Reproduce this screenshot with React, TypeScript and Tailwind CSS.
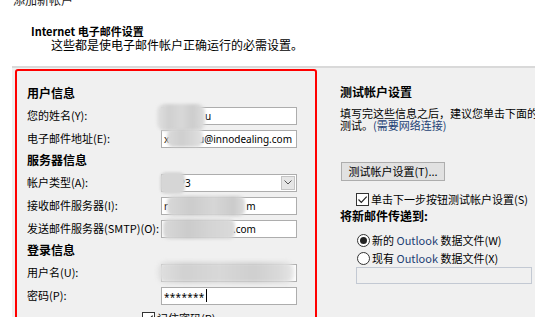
import type { ReactNode } from "react";

const cjk = "font-['Noto_Sans_CJK_SC',sans-serif]";
const latin = "font-['Noto_Sans','Noto_Sans_CJK_SC',sans-serif]";

function Heading({ children }: { children: ReactNode }) {
  return <div className="mb-[2px] flex h-[19px] items-center text-[12px] font-bold leading-none">{children}</div>;
}

function Row({ label, children }: { label: string; children: ReactNode }) {
  return (
    <div className="flex h-[23px] items-center">
      <div className="w-[134px] shrink-0 whitespace-nowrap text-[11px] leading-none">{label}</div>
      <div className="relative">{children}</div>
    </div>
  );
}

function TextBox({ children, className = "" }: { children?: ReactNode; className?: string }) {
  return (
    <div
      className={`flex h-[18px] w-[136px] items-center whitespace-nowrap border border-[#adadad] bg-white px-[2px] text-[10px] leading-none ${latin} ${className}`}
    >
      {children}
    </div>
  );
}

function CheckBox() {
  return (
    <span className="inline-flex h-[13px] w-[13px] shrink-0 items-center justify-center border border-[#333] bg-white">
      <svg width="11" height="11" viewBox="0 0 11 11" fill="none" stroke="#222" strokeWidth="1.2">
        <path d="M1.5 5.5 L4.3 8.3 L9.7 2.6" />
      </svg>
    </span>
  );
}

function Radio({ checked }: { checked?: boolean }) {
  return (
    <span className="inline-flex h-[13px] w-[13px] shrink-0 items-center justify-center rounded-full border border-[#333] bg-white">
      {checked && <span className="h-[7px] w-[7px] rounded-full bg-[#222]" />}
    </span>
  );
}

export default function App() {
  return (
    <div className={`flex h-[317px] w-[535px] flex-col overflow-hidden bg-white text-black ${cjk}`}>
      <div className="h-[66px] shrink-0">
        <div className="-mt-[6px] pl-[13px] text-[12px] leading-[12px] text-[#222]">添加新帐户</div>
        <div className="mt-[18px] pl-[31px] text-[11px] font-bold leading-[14px]">Internet 电子邮件设置</div>
        <div className="pl-[51px] text-[12px] leading-[14px]">这些都是使电子邮件帐户正确运行的必需设置。</div>
      </div>

      <div className="flex min-h-0 flex-1">
        <div className="w-[12px] shrink-0" />
        <div className="flex flex-1 border-t-2 border-[#d9d9d9] bg-[#f0f0f0]">
          {/* left: account fields, outlined in red */}
          <div className="ml-[3px] mt-[1px] h-[270px] w-[302px] shrink-0 rounded-[3px] border-2 border-[#ff0000] pl-[10px] pt-[12px]">
            <Heading>用户信息</Heading>
            <Row label="您的姓名(Y):">
              <TextBox className="pl-[43px]">u</TextBox>
              <div className="pointer-events-none absolute -left-[4px] -top-[3px] z-10 h-[27px] w-[48px] rounded-[8px] bg-[linear-gradient(90deg,#e0e0e0_0%,#d0d0d0_25%,#d8d8d8_50%,#cdcdcd_75%,#dedede_100%)] blur-[1.5px]" />
            </Row>
            <Row label="电子邮件地址(E):">
              <TextBox className="justify-between pr-[4px]">
                <span>x</span>
                <span>ou@innodealing.com</span>
              </TextBox>
              <div className="pointer-events-none absolute left-[6px] -top-[1px] z-10 h-[18px] w-[36px] rounded-[6px] bg-[linear-gradient(90deg,#dadada_0%,#cfcfcf_40%,#d8d8d8_75%,#e2e2e2_100%)] blur-[1.5px]" />
            </Row>
            <Heading>服务器信息</Heading>
            <Row label="帐户类型(A):">
              <div className={`flex h-[18px] w-[136px] items-center border border-[#adadad] bg-white text-[10px] leading-none ${latin}`}>
                <span className="flex-1 pl-[3px]">POP3</span>
                <span className="mr-[1px] flex h-[14px] w-[14px] items-center justify-center border border-[#c4c4c4] bg-[#e6e6e6]">
                  <svg width="8" height="5" viewBox="0 0 8 5" fill="none" stroke="#555" strokeWidth="1">
                    <path d="M0.5 0.5 L4 4 L7.5 0.5" />
                  </svg>
                </span>
              </div>
              <div className="pointer-events-none absolute -left-[1px] -top-[2px] z-10 h-[22px] w-[25px] rounded-[6px] bg-[#d6d6d6] blur-[1px]" />
            </Row>
            <Row label="接收邮件服务器(I):">
              <TextBox>
                <span>r</span>
                <span className="ml-[78px]">m</span>
              </TextBox>
              <div className="pointer-events-none absolute left-[6px] -top-[1px] z-10 h-[20px] w-[78px] rounded-[6px] bg-[linear-gradient(90deg,#d8d8d8_0%,#cccccc_30%,#d6d6d6_60%,#cbcbcb_85%,#dcdcdc_100%)] blur-[1.5px]" />
            </Row>
            <Row label="发送邮件服务器(SMTP)(O):">
              <TextBox className="pl-[71px]">.com</TextBox>
              <div className="pointer-events-none absolute left-[2px] -top-[1px] z-10 h-[20px] w-[72px] rounded-[6px] bg-[linear-gradient(90deg,#d8d8d8_0%,#cbcbcb_35%,#d4d4d4_65%,#dadada_100%)] blur-[1.5px]" />
            </Row>
            <Heading>登录信息</Heading>
            <Row label="用户名(U):">
              <TextBox />
              <div className="pointer-events-none absolute -left-[3px] -top-[2px] z-10 h-[21px] w-[136px] rounded-[8px] bg-[linear-gradient(90deg,#e0e0e0_0%,#d1d1d1_20%,#d8d8d8_45%,#cfcfcf_70%,#dadada_90%,#e6e6e6_100%)] blur-[2px]" />
            </Row>
            <Row label="密码(P):">
              <TextBox>
                <span className="pt-[3px] tracking-[0.3px]">*******</span>
                <span className="ml-[1px] h-[13px] w-[1px] bg-black" />
              </TextBox>
            </Row>
            <div className="flex h-[23px] items-center pl-[115px] text-[11px] leading-none">
              <CheckBox />
              <span className="ml-[2px]">记住密码(R)</span>
            </div>
          </div>

          {/* right: test settings */}
          <div className="ml-[23px] min-w-0 flex-1 pt-[14px] text-[11px]">
            <div className="flex h-[19px] items-center text-[12px] font-bold leading-none">测试帐户设置</div>
            <div className="mt-[6px] whitespace-nowrap leading-[12px]">填写完这些信息之后，建议您单击下面的按钮进行帐户</div>
            <div className="whitespace-nowrap leading-[12px]">
              测试。<span className="text-[#233f74]">(需要网络连接)</span>
            </div>
            <div className="mt-[31px] ml-[1px] flex h-[19px] w-[104px] items-center justify-center border border-[#adadad] bg-[#e1e1e1] leading-none">
              测试帐户设置(T)...
            </div>
            <div className="mt-[10px] flex h-[16px] items-center whitespace-nowrap pl-[16px] leading-none">
              <CheckBox />
              <span className="ml-[2px]">单击下一步按钮测试帐户设置(S)</span>
            </div>
            <div className="mt-[1px] flex h-[16px] items-center text-[12px] font-bold leading-none">将新邮件传递到:</div>
            <div className="mt-[8px] flex h-[16px] items-center whitespace-nowrap pl-[17px] leading-none">
              <Radio checked />
              <span className="ml-[2px]">
                新的 <span className="text-[#233f74]">Outlook</span> 数据文件(W)
              </span>
            </div>
            <div className="mt-[2px] flex h-[16px] items-center whitespace-nowrap pl-[17px] leading-none">
              <Radio />
              <span className="ml-[2px]">
                现有 <span className="text-[#233f74]">Outlook</span> 数据文件(X)
              </span>
            </div>
            <div className="ml-[16px] mt-[1px] h-[17px] w-[176px] border border-[#c3c9d3] bg-[#f0f0f0]" />
          </div>
        </div>
      </div>
    </div>
  );
}
